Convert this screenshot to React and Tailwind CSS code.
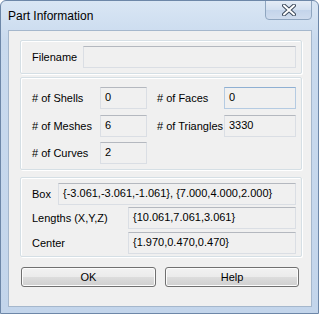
import React from "react";

const font = { fontFamily: '"Liberation Sans", Arial, sans-serif' };

const Field = ({ value = "", className = "", blue = false }) => (
  <div
    className={`h-[22px] shrink-0 bg-[#f0f0f0] border pl-[4px] pt-[3px] text-[11px] leading-[13px] text-black whitespace-nowrap overflow-hidden ${
      blue ? "border-[#b5cbe2] border-t-[#8fb0d3]" : "border-[#dadee4] border-t-[#b4b8bf]"
    } ${className}`}
  >
    {value}
  </div>
);

const Group = ({ className = "", children }) => (
  <div
    className={`w-[282px] border border-[#d5dfe5] rounded-[2px] shadow-[inset_1px_1px_0_#ffffff,1px_1px_0_#ffffff] ${className}`}
  >
    {children}
  </div>
);

const Label = ({ children, className = "" }) => (
  <div className={`shrink-0 text-[11px] leading-[13px] text-black whitespace-nowrap ${className}`}>{children}</div>
);

const Button = ({ children, className = "" }) => (
  <button
    className={`h-[20px] rounded-[3px] border border-[#707070] shadow-[inset_0_0_0_1px_#fcfcfc] bg-[linear-gradient(#f2f2f2_0%,#ebebeb_50%,#dddddd_50%,#cfcfcf_100%)] text-[11px] text-black ${className}`}
  >
    {children}
  </button>
);

export default function App() {
  return (
    <div
      style={font}
      className="w-[319px] h-[314px] rounded-t-[6px] border border-[#6d87a8] bg-[linear-gradient(#d9e6f4,#c9daee_40px,#c3d5eb)] flex flex-col overflow-hidden"
    >
      {/* title bar */}
      <div className="h-[29px] shrink-0 flex items-start relative">
        <span className="ml-[7px] mt-[8px] text-[12px] leading-[14px] text-black">Part Information</span>
        <div className="absolute right-[6px] top-[-1px] w-[47px] h-[20px] rounded-b-[4px] border border-[#8fa6c0] bg-[linear-gradient(#e4ecf6,#d2dff0_50%,#c3d4ea_50%,#cfdcee)] flex items-center justify-center">
          <svg width="14" height="12" viewBox="0 0 14 12">
            <path d="M2 1.5 L12 10.5 M12 1.5 L2 10.5" stroke="#3c4a5c" strokeWidth="4" strokeLinecap="round" />
            <path d="M2 1.5 L12 10.5 M12 1.5 L2 10.5" stroke="#ffffff" strokeWidth="2" strokeLinecap="round" />
          </svg>
        </div>
      </div>

      {/* client area */}
      <div className="ml-[7px] w-[304px] h-[277px] border border-[#a5b7cc] bg-[#f0f0f0] pl-[11px] pt-[9px] flex flex-col">
        <Group className="h-[34px] flex items-center pl-[11px]">
          <Label className="w-[51px]">Filename</Label>
          <Field className="w-[213px]" />
        </Group>

        <Group className="mt-[3px] h-[93px] pl-[11px] pt-[9px] flex flex-col">
          <div className="flex items-center">
            <Label className="w-[68px]">
              # of Shells
            </Label>
            <Field className="w-[47px]" value="0" />
            <Label className="ml-[10px] w-[67px]"># of Faces</Label>
            <Field className="w-[72px]" value="0" blue />
          </div>
          <div className="flex items-center mt-[6px]">
            <Label className="w-[68px]"># of Meshes</Label>
            <Field className="w-[47px]" value="6" />
            <Label className="ml-[10px] w-[67px]"># of Triangles</Label>
            <Field className="w-[72px]" value="3330" />
          </div>
          <div className="flex items-center mt-[5px]">
            <Label className="w-[68px]"># of Curves</Label>
            <Field className="w-[47px]" value="2" />
          </div>
        </Group>

        <Group className="mt-[7px] h-[80px] pl-[11px] pt-[5px] flex flex-col">
          <div className="flex items-center">
            <Label className="w-[26px]">Box</Label>
            <Field className="w-[238px]" value="{-3.061,-3.061,-1.061}, {7.000,4.000,2.000}" />
          </div>
          <div className="flex items-center mt-[2px]">
            <Label className="w-[96px]">Lengths (X,Y,Z)</Label>
            <Field className="w-[168px]" value="{10.061,7.061,3.061}" />
          </div>
          <div className="flex items-center mt-[3px]">
            <Label className="w-[96px]">Center</Label>
            <Field className="w-[168px]" value="{1.970,0.470,0.470}" />
          </div>
        </Group>

        <div className="mt-[10px] flex">
          <Button className="ml-[1px] w-[135px]">OK</Button>
          <Button className="ml-[9px] w-[134px]">Help</Button>
        </div>
      </div>
    </div>
  );
}
